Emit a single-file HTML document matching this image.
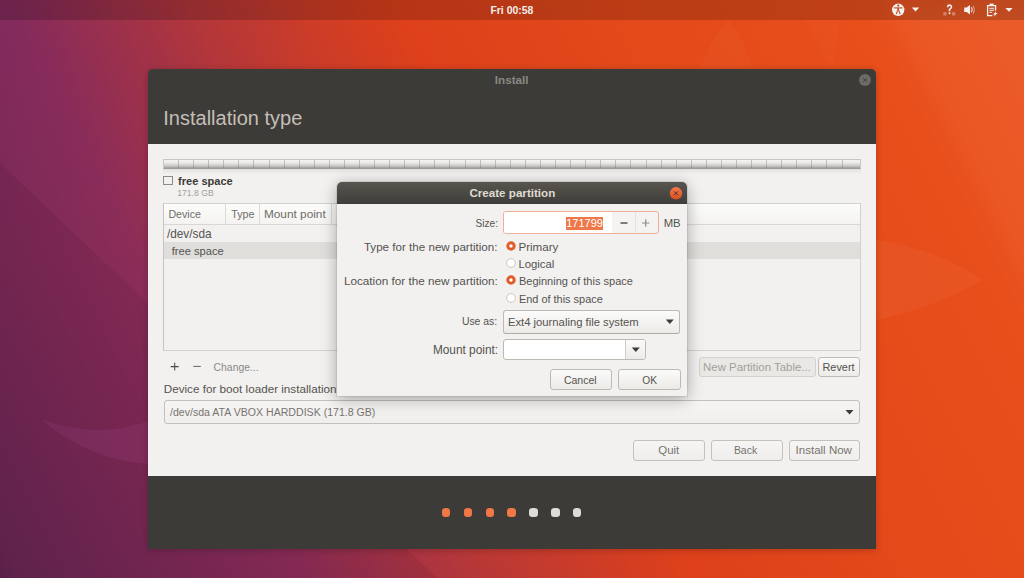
<!DOCTYPE html>
<html><head><meta charset="utf-8">
<style>
*{margin:0;padding:0;box-sizing:border-box}
html,body{width:1024px;height:578px;overflow:hidden}
body{position:relative;font-family:"Liberation Sans",sans-serif;line-height:1;
background:linear-gradient(62.6deg,#5f224e 0%,#652651 2%,#8c2d58 23%,#b93836 37%,#dd401b 52%,#e44a1a 70%,#e84e1a 85%,#ea5622 100%);}
.t{position:absolute;white-space:nowrap;line-height:1}
</style></head><body>
<div style="position:absolute;left:0;top:0;width:1024px;height:578px;background:radial-gradient(320px 260px at 0 0,rgba(90,30,120,0.16),rgba(90,30,120,0))"></div>
<div style="position:absolute;left:0;top:0;width:1024px;height:578px;background:rgba(40,0,30,0.08);clip-path:polygon(0 163px,437px 578px,0 578px)"></div>
<svg style="position:absolute;left:0;top:0" width="1024" height="578"><defs><filter id="bl" x="-20%" y="-20%" width="140%" height="140%"><feGaussianBlur stdDeviation="10"/></filter></defs><path d="M880 0 L1040 0 L1040 320 Q960 150 880 0Z" fill="rgba(255,255,255,0.035)" filter="url(#bl)"/><path d="M41 419 Q95 440 149 421 L149 464 Q88 460 41 419Z" fill="rgba(160,70,130,0.22)"/><path d="M876 240 Q935 248 982 280 Q935 308 876 320Z" fill="rgba(255,255,255,0.04)"/><path d="M700 69 Q712 35 729 20 Q745 40 752 69Z" fill="rgba(255,255,255,0.025)"/><path d="M805 20 L840 20 L832 69Z" fill="rgba(255,255,255,0.02)"/></svg>
<div style="position:absolute;left:0px;top:0px;width:1024px;height:20px;background:rgba(0,0,0,0.18)"></div>
<div class="t" style="left:490.40px;top:6px;font-size:10.45px;color:#f2eeea;font-weight:bold;">Fri 00:58</div>
<svg style="position:absolute;left:0;top:0" width="1024" height="20">
 <circle cx="898.2" cy="9.8" r="6.2" fill="#f4f1ee"/>
 <g fill="#c1441c" stroke="#c1441c"><circle cx="898.2" cy="5.6" r="1.1" stroke="none"/><path d="M893.9 7.9 L902.5 7.9" stroke-width="1.1"/><path d="M897.4 8 L899 8 L898.9 10.8 L897.5 10.8Z" stroke="none"/><path d="M897.7 10.4 L896.2 14.1 M898.7 10.4 L900.2 14.1" stroke-width="1.1" fill="none"/></g>
 <path d="M911.8 7.6 L919.2 7.6 L915.5 11.6Z" fill="#f4f1ee"/>
 <path d="M1005.3 8 L1012.6 8 L1009 11.8Z" fill="#f4f1ee"/>
 <path d="M947.6 7.3 Q947.6 5.2 949.5 5.2 Q951.5 5.2 951.5 7.1 Q951.5 8.3 949.5 9.4 L949.5 11.3" stroke="#f4f1ee" stroke-width="1.5" fill="none"/>
 <rect x="948.7" y="12.4" width="1.7" height="1.7" fill="#f4f1ee"/>
 <rect x="943.4" y="12.2" width="3.2" height="3.2" fill="#e9cfc4" opacity="0.45"/><rect x="952.1" y="12.2" width="3.2" height="3.2" fill="#e9cfc4" opacity="0.45"/>
 <rect x="947.3" y="3.8" width="3.6" height="0.9" fill="#e9cfc4" opacity="0.45"/>
 <path d="M964.2 7.6 L966.6 7.6 L970 5 L970 14.6 L966.6 12 L964.2 12Z" fill="#f4f1ee"/>
 <path d="M971.5 7.3 Q972.8 9.8 971.5 12.3" stroke="#f4f1ee" stroke-width="1.1" fill="none"/>
 <path d="M973.3 5.8 Q975.6 9.8 973.3 13.8" stroke="#f4f1ee" stroke-width="0.9" fill="none" opacity="0.6"/>
 <path d="M995.6 10.6 L995.6 5.6 L987.6 5.6 L987.6 15.6 L992.4 15.6" fill="none" stroke="#f4f1ee" stroke-width="1.3"/>
 <rect x="989.6" y="3.6" width="4" height="2.4" fill="#f4f1ee"/>
 <path d="M989.4 8.3 H994.2 M989.4 10.3 H994.2 M989.4 12.3 H992.2" stroke="#f4f1ee" stroke-width="1"/>
 <path d="M996.4 11 L992.9 14.4 L994.9 14.4 L993.9 16.8 L997.6 13.1 L995.5 13.1Z" fill="#f4f1ee"/>
</svg>
<div style="position:absolute;left:148px;top:69px;width:728px;height:480px;background:#3c3b37;border-radius:5px 5px 0 0;box-shadow:0 1px 7px rgba(0,0,0,0.22)"></div>
<div style="position:absolute;left:148px;top:144px;width:728px;height:332px;background:#f2f1f0"></div>
<div class="t" style="left:494.80px;top:74px;font-size:11.7px;color:#8a8883;font-weight:bold;">Install</div>
<svg style="position:absolute;left:858px;top:73px" width="14" height="14"><circle cx="7" cy="7" r="6" fill="#6d6b66"/><path d="M5 5 L9 9 M9 5 L5 9" stroke="#45433f" stroke-width="1"/></svg>
<div class="t" style="left:163.30px;top:108px;font-size:20px;color:#c3bfb7;">Installation type</div>
<div style="position:absolute;left:163px;top:159px;width:698px;height:10px;border:1px solid #c8c6c2;border-bottom-color:#9e9c98;border-radius:1px;background:linear-gradient(#f5f4f3,#ebe9e6 35%,#c9c7c3 75%,#9f9d99)"></div>
<div style="position:absolute;left:178.0px;top:160px;width:1px;height:8px;background:rgba(110,108,104,0.35)"></div><div style="position:absolute;left:193.1px;top:160px;width:1px;height:8px;background:rgba(110,108,104,0.35)"></div><div style="position:absolute;left:208.2px;top:160px;width:1px;height:8px;background:rgba(110,108,104,0.35)"></div><div style="position:absolute;left:223.2px;top:160px;width:1px;height:8px;background:rgba(110,108,104,0.35)"></div><div style="position:absolute;left:238.3px;top:160px;width:1px;height:8px;background:rgba(110,108,104,0.35)"></div><div style="position:absolute;left:253.4px;top:160px;width:1px;height:8px;background:rgba(110,108,104,0.35)"></div><div style="position:absolute;left:268.5px;top:160px;width:1px;height:8px;background:rgba(110,108,104,0.35)"></div><div style="position:absolute;left:283.6px;top:160px;width:1px;height:8px;background:rgba(110,108,104,0.35)"></div><div style="position:absolute;left:298.6px;top:160px;width:1px;height:8px;background:rgba(110,108,104,0.35)"></div><div style="position:absolute;left:313.7px;top:160px;width:1px;height:8px;background:rgba(110,108,104,0.35)"></div><div style="position:absolute;left:328.8px;top:160px;width:1px;height:8px;background:rgba(110,108,104,0.35)"></div><div style="position:absolute;left:343.9px;top:160px;width:1px;height:8px;background:rgba(110,108,104,0.35)"></div><div style="position:absolute;left:359.0px;top:160px;width:1px;height:8px;background:rgba(110,108,104,0.35)"></div><div style="position:absolute;left:374.0px;top:160px;width:1px;height:8px;background:rgba(110,108,104,0.35)"></div><div style="position:absolute;left:389.1px;top:160px;width:1px;height:8px;background:rgba(110,108,104,0.35)"></div><div style="position:absolute;left:404.2px;top:160px;width:1px;height:8px;background:rgba(110,108,104,0.35)"></div><div style="position:absolute;left:419.3px;top:160px;width:1px;height:8px;background:rgba(110,108,104,0.35)"></div><div style="position:absolute;left:434.4px;top:160px;width:1px;height:8px;background:rgba(110,108,104,0.35)"></div><div style="position:absolute;left:449.4px;top:160px;width:1px;height:8px;background:rgba(110,108,104,0.35)"></div><div style="position:absolute;left:464.5px;top:160px;width:1px;height:8px;background:rgba(110,108,104,0.35)"></div><div style="position:absolute;left:479.6px;top:160px;width:1px;height:8px;background:rgba(110,108,104,0.35)"></div><div style="position:absolute;left:494.7px;top:160px;width:1px;height:8px;background:rgba(110,108,104,0.35)"></div><div style="position:absolute;left:509.8px;top:160px;width:1px;height:8px;background:rgba(110,108,104,0.35)"></div><div style="position:absolute;left:524.8px;top:160px;width:1px;height:8px;background:rgba(110,108,104,0.35)"></div><div style="position:absolute;left:539.9px;top:160px;width:1px;height:8px;background:rgba(110,108,104,0.35)"></div><div style="position:absolute;left:555.0px;top:160px;width:1px;height:8px;background:rgba(110,108,104,0.35)"></div><div style="position:absolute;left:570.1px;top:160px;width:1px;height:8px;background:rgba(110,108,104,0.35)"></div><div style="position:absolute;left:585.2px;top:160px;width:1px;height:8px;background:rgba(110,108,104,0.35)"></div><div style="position:absolute;left:600.2px;top:160px;width:1px;height:8px;background:rgba(110,108,104,0.35)"></div><div style="position:absolute;left:615.3px;top:160px;width:1px;height:8px;background:rgba(110,108,104,0.35)"></div><div style="position:absolute;left:630.4px;top:160px;width:1px;height:8px;background:rgba(110,108,104,0.35)"></div><div style="position:absolute;left:645.5px;top:160px;width:1px;height:8px;background:rgba(110,108,104,0.35)"></div><div style="position:absolute;left:660.6px;top:160px;width:1px;height:8px;background:rgba(110,108,104,0.35)"></div><div style="position:absolute;left:675.6px;top:160px;width:1px;height:8px;background:rgba(110,108,104,0.35)"></div><div style="position:absolute;left:690.7px;top:160px;width:1px;height:8px;background:rgba(110,108,104,0.35)"></div><div style="position:absolute;left:705.8px;top:160px;width:1px;height:8px;background:rgba(110,108,104,0.35)"></div><div style="position:absolute;left:720.9px;top:160px;width:1px;height:8px;background:rgba(110,108,104,0.35)"></div><div style="position:absolute;left:736.0px;top:160px;width:1px;height:8px;background:rgba(110,108,104,0.35)"></div><div style="position:absolute;left:751.0px;top:160px;width:1px;height:8px;background:rgba(110,108,104,0.35)"></div><div style="position:absolute;left:766.1px;top:160px;width:1px;height:8px;background:rgba(110,108,104,0.35)"></div><div style="position:absolute;left:781.2px;top:160px;width:1px;height:8px;background:rgba(110,108,104,0.35)"></div><div style="position:absolute;left:796.3px;top:160px;width:1px;height:8px;background:rgba(110,108,104,0.35)"></div><div style="position:absolute;left:811.4px;top:160px;width:1px;height:8px;background:rgba(110,108,104,0.35)"></div><div style="position:absolute;left:826.4px;top:160px;width:1px;height:8px;background:rgba(110,108,104,0.35)"></div><div style="position:absolute;left:841.5px;top:160px;width:1px;height:8px;background:rgba(110,108,104,0.35)"></div>
<div style="position:absolute;left:163px;top:169px;width:698px;height:5px;background:linear-gradient(rgba(0,0,0,0.07),rgba(0,0,0,0))"></div>
<div style="position:absolute;left:163px;top:176px;width:10px;height:9px;border:1px solid #8d8b87;background:#f2f1f0"></div>
<div class="t" style="left:178.10px;top:176px;font-size:11.04px;color:#3c3b37;font-weight:bold;">free space</div>
<div class="t" style="left:177.20px;top:189px;font-size:8.64px;color:#a29f9a;">171.8 GB</div>
<div style="position:absolute;left:163px;top:203px;width:698px;height:148px;border:1px solid #d3d1cd;border-left-color:#c6c4c0;background:#f2f1f0"></div>
<div style="position:absolute;left:164px;top:204px;width:696px;height:20px;background:linear-gradient(#fcfcfb,#f4f3f1)"></div>
<div style="position:absolute;left:164px;top:224px;width:696px;height:1px;background:#d9d7d3"></div>
<div style="position:absolute;left:225px;top:204px;width:1px;height:20px;background:#dcdad6"></div>
<div style="position:absolute;left:259px;top:204px;width:1px;height:20px;background:#dcdad6"></div>
<div style="position:absolute;left:331px;top:204px;width:1px;height:20px;background:#dcdad6"></div>
<div class="t" style="left:168.40px;top:209px;font-size:10.63px;color:#6f6d68;">Device</div>
<div class="t" style="left:231.20px;top:209px;font-size:10.7px;color:#6f6d68;">Type</div>
<div class="t" style="left:263.90px;top:209px;font-size:11.83px;color:#6f6d68;">Mount point</div>
<div class="t" style="left:166.90px;top:229px;font-size:11.85px;color:#55534f;">/dev/sda</div>
<div style="position:absolute;left:164px;top:242px;width:696px;height:17px;background:#dfdedb"></div>
<div class="t" style="left:171.70px;top:246px;font-size:11.14px;color:#55534f;">free space</div>
<svg style="position:absolute;left:168px;top:361px" width="36" height="12"><path d="M2.7 5.6 L10.7 5.6 M6.7 1.7 L6.7 9.5" stroke="#4c4a47" stroke-width="1.05"/><path d="M25.3 5.4 L32.8 5.4" stroke="#6f6d69" stroke-width="1.05"/></svg>
<div class="t" style="left:213.60px;top:363px;font-size:10.38px;color:#8b8985;">Change...</div>
<div style="position:absolute;left:699px;top:357px;width:117px;height:20px;border:1px solid #d4d2ce;border-radius:3px;background:#e9e8e5"></div>
<div class="t" style="left:703.10px;top:362px;font-size:11.43px;color:#a3a09b;">New Partition Table...</div>
<div style="position:absolute;left:818px;top:357px;width:42px;height:20px;border:1px solid #bfbcb6;border-radius:3px;background:linear-gradient(#fafaf9,#edebe8)"></div>
<div class="t" style="left:822.50px;top:362px;font-size:10.9px;color:#55534f;">Revert</div>
<div class="t" style="left:163.70px;top:383px;font-size:11.7px;color:#55534f;">Device for boot loader installation:</div>
<div style="position:absolute;left:164px;top:400px;width:696px;height:24px;border:1px solid #c4c1bb;border-radius:3px;background:linear-gradient(#f6f5f4,#efeeec)"></div>
<div class="t" style="left:170.00px;top:407px;font-size:10.59px;color:#77746f;">/dev/sda ATA VBOX HARDDISK (171.8 GB)</div>
<svg style="position:absolute;left:845px;top:408px" width="10" height="8"><path d="M0.5 2 L8.5 2 L4.5 6.5Z" fill="#3c3b37"/></svg>
<div style="position:absolute;left:633px;top:440px;width:72px;height:21px;border:1px solid #c4c1bb;border-radius:3px;background:linear-gradient(#f6f5f4,#efeeec)"></div>
<div class="t" style="left:658.30px;top:445px;font-size:11.45px;color:#77746f;">Quit</div>
<div style="position:absolute;left:711px;top:440px;width:72px;height:21px;border:1px solid #c4c1bb;border-radius:3px;background:linear-gradient(#f6f5f4,#efeeec)"></div>
<div class="t" style="left:733.90px;top:446px;font-size:10.48px;color:#77746f;">Back</div>
<div style="position:absolute;left:789px;top:440px;width:71px;height:21px;border:1px solid #c4c1bb;border-radius:3px;background:linear-gradient(#f6f5f4,#efeeec)"></div>
<div class="t" style="left:795.60px;top:445px;font-size:11.53px;color:#77746f;">Install Now</div>
<div style="position:absolute;left:441.8px;top:508.1px;width:8.6px;height:8.6px;background:#f07746;border-radius:3.3px"></div>
<div style="position:absolute;left:463.5px;top:508.1px;width:8.6px;height:8.6px;background:#f07746;border-radius:3.3px"></div>
<div style="position:absolute;left:485.5px;top:508.1px;width:8.6px;height:8.6px;background:#f07746;border-radius:3.3px"></div>
<div style="position:absolute;left:507.4px;top:508.1px;width:8.6px;height:8.6px;background:#f07746;border-radius:3.3px"></div>
<div style="position:absolute;left:529.0px;top:508.1px;width:8.6px;height:8.6px;background:#dddcd9;border-radius:3.3px"></div>
<div style="position:absolute;left:551.0px;top:508.1px;width:8.6px;height:8.6px;background:#dddcd9;border-radius:3.3px"></div>
<div style="position:absolute;left:572.6px;top:508.1px;width:8.6px;height:8.6px;background:#dddcd9;border-radius:3.3px"></div>
<div style="position:absolute;left:337px;top:182px;width:350px;height:214px;background:#f2f1f0;border-radius:5px 5px 0 0;box-shadow:0 3px 16px rgba(0,0,0,0.33),0 0 0 1px rgba(0,0,0,0.07)"></div>
<div style="position:absolute;left:337px;top:182px;width:350px;height:22px;border-radius:5px 5px 0 0;background:linear-gradient(#58554f,#3e3d39)"></div>
<div class="t" style="left:469.40px;top:187px;font-size:11.64px;color:#dfdbd2;font-weight:bold;">Create partition</div>
<svg style="position:absolute;left:669px;top:186px" width="14" height="14"><defs><linearGradient id="og" x1="0" y1="0" x2="0" y2="1"><stop offset="0" stop-color="#f47b4b"/><stop offset="1" stop-color="#d94d1f"/></linearGradient></defs><circle cx="7" cy="7.3" r="6.2" fill="url(#og)"/><path d="M5 5.3 L9 9.3 M9 5.3 L5 9.3" stroke="#3a2a22" stroke-width="0.9"/></svg>
<div class="t" style="left:475.60px;top:219px;font-size:10.08px;color:#55534f;">Size:</div>
<div class="t" style="left:363.90px;top:241px;font-size:11.62px;color:#55534f;">Type for the new partition:</div>
<div class="t" style="left:343.90px;top:275px;font-size:11.74px;color:#55534f;">Location for the new partition:</div>
<div class="t" style="left:461.90px;top:317px;font-size:10.41px;color:#55534f;">Use as:</div>
<div class="t" style="left:432.90px;top:345px;font-size:11.85px;color:#55534f;">Mount point:</div>
<div style="position:absolute;left:503px;top:211px;width:156px;height:23px;border:1px solid #eeb097;border-radius:3px;background:#f4f3f1"></div>
<div style="position:absolute;left:504px;top:212px;width:108px;height:21px;border-radius:2px 6px 6px 2px;background:#ffffff"></div>
<div style="position:absolute;left:596px;top:212px;width:16px;height:21px;background:linear-gradient(90deg,rgba(255,255,255,0),#fff)"></div>
<div style="position:absolute;left:635px;top:212px;width:1px;height:21px;background:#e4e2de"></div>
<div style="position:absolute;left:566px;top:217px;width:37px;height:12.5px;background:#ef784a"></div>
<div class="t" style="left:566.20px;top:218px;font-size:11px;color:#ffffff;">171799</div>
<svg style="position:absolute;left:618px;top:217px" width="34" height="12"><path d="M2.5 6 L9.5 6" stroke="#4c4a47" stroke-width="1.4"/><path d="M24 6 L31.5 6 M27.75 2.2 L27.75 9.8" stroke="#8e8b86" stroke-width="1.2"/></svg>
<div class="t" style="left:663.70px;top:218px;font-size:11.33px;color:#55534f;">MB</div>
<svg style="position:absolute;left:504.6px;top:239.9px" width="12" height="12"><circle cx="6" cy="6" r="4.7" fill="#df5d2b"/><circle cx="6" cy="6" r="1.7" fill="#ffffff"/></svg>
<div class="t" style="left:518.40px;top:241px;font-size:11.61px;color:#55534f;">Primary</div>
<svg style="position:absolute;left:504.6px;top:257.3px" width="12" height="12"><circle cx="6" cy="6" r="4.4" fill="#ffffff" stroke="#c6c3bd" stroke-width="0.9"/></svg>
<div class="t" style="left:518.40px;top:259px;font-size:11.36px;color:#55534f;">Logical</div>
<svg style="position:absolute;left:504.5px;top:274.4px" width="12" height="12"><circle cx="6" cy="6" r="4.7" fill="#df5d2b"/><circle cx="6" cy="6" r="1.7" fill="#ffffff"/></svg>
<div class="t" style="left:518.90px;top:276px;font-size:11.04px;color:#55534f;">Beginning of this space</div>
<svg style="position:absolute;left:504.5px;top:291.7px" width="12" height="12"><circle cx="6" cy="6" r="4.4" fill="#ffffff" stroke="#c6c3bd" stroke-width="0.9"/></svg>
<div class="t" style="left:518.90px;top:294px;font-size:10.95px;color:#55534f;">End of this space</div>
<div style="position:absolute;left:503px;top:310px;width:177px;height:24px;border:1px solid #bcb9b3;border-bottom-color:#aeaba5;border-radius:3px;background:linear-gradient(#fbfbfa,#edebe8)"></div>
<div class="t" style="left:507.90px;top:317px;font-size:11.28px;color:#55534f;">Ext4 journaling file system</div>
<svg style="position:absolute;left:665px;top:318px" width="10" height="8"><path d="M0.8 1.5 L8.8 1.5 L4.8 6Z" fill="#3c3b37"/></svg>
<div style="position:absolute;left:503px;top:339px;width:143px;height:21px;border:1px solid #bcb9b3;border-radius:3px;background:#ffffff"></div>
<div style="position:absolute;left:625px;top:340px;width:20px;height:19px;border-left:1px solid #cfccc7;border-radius:0 2px 2px 0;background:linear-gradient(#fbfbfa,#edebe8)"></div>
<svg style="position:absolute;left:631px;top:346px" width="10" height="8"><path d="M0.8 1.5 L8.8 1.5 L4.8 6Z" fill="#3c3b37"/></svg>
<div style="position:absolute;left:550px;top:369px;width:62px;height:21px;border:1px solid #bcb9b3;border-radius:3px;background:linear-gradient(#fbfbfa,#eceae7)"></div>
<div class="t" style="left:563.90px;top:375px;font-size:10.54px;color:#55534f;">Cancel</div>
<div style="position:absolute;left:618px;top:369px;width:63px;height:21px;border:1px solid #bcb9b3;border-radius:3px;background:linear-gradient(#fbfbfa,#eceae7)"></div>
<div class="t" style="left:642.20px;top:376px;font-size:10.24px;color:#55534f;">OK</div>
</body></html>
